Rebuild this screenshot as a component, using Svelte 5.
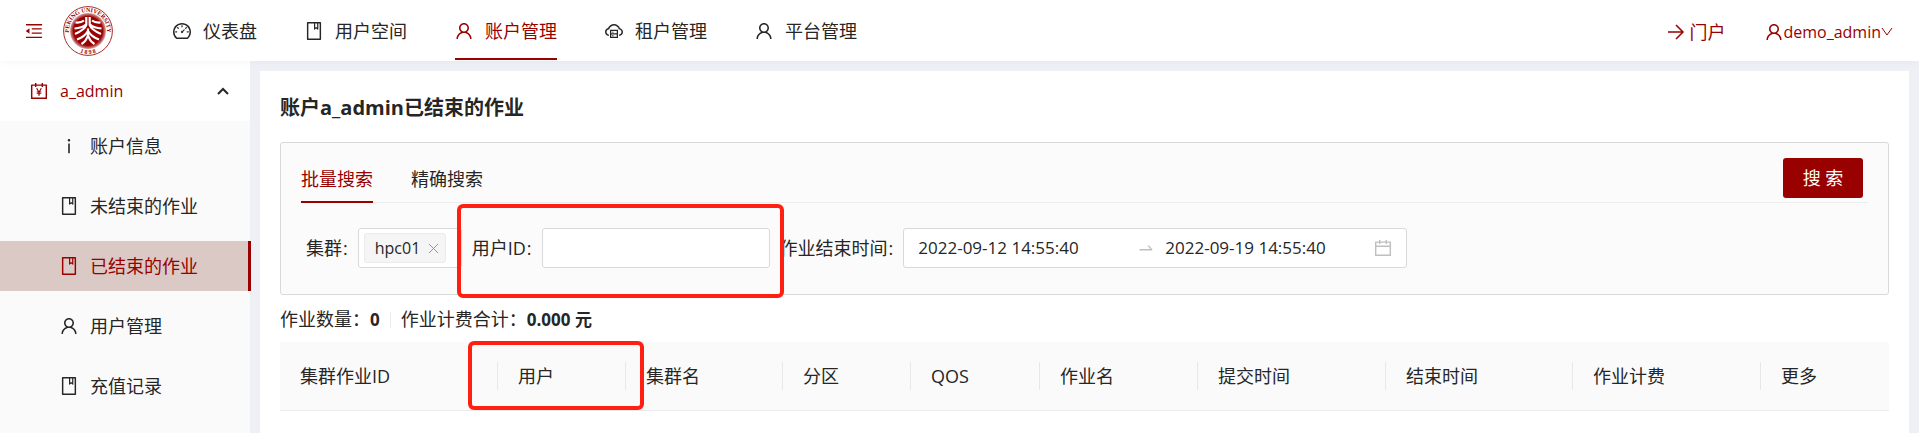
<script>
  const icons = {
    user: 'M858.5 763.6a374 374 0 00-80.6-119.5 375.63 375.63 0 00-119.5-80.6c-.4-.2-.8-.3-1.2-.5C719.5 518 760 444.7 760 362c0-137-111-248-248-248S264 225 264 362c0 82.7 40.5 156 102.8 201.1-.4.2-.8.3-1.2.5-44.8 18.9-85 46-119.5 80.6a375.63 375.63 0 00-80.6 119.5A371.7 371.7 0 00136 901.8a8 8 0 008 8.2h60c4.4 0 7.9-3.5 8-7.8 2-77.2 33-149.5 87.8-204.3 56.7-56.7 132-87.9 212.2-87.9s155.5 31.2 212.2 87.9C779 752.7 810 825 812 902.2c.1 4.4 3.6 7.8 8 7.8h60a8 8 0 008-8.2c-1-47.8-10.9-94.3-29.5-138.2zM512 534c-45.9 0-89.1-17.9-121.6-50.4S340 407.9 340 362c0-45.9 17.9-89.1 50.4-121.6S466.1 190 512 190s89.1 17.9 121.6 50.4S684 316.1 684 362c0 45.9-17.9 89.1-50.4 121.6S557.9 534 512 534z',
    book: 'M832 64H192c-17.7 0-32 14.3-32 32v832c0 17.7 14.3 32 32 32h640c17.7 0 32-14.3 32-32V96c0-17.7-14.3-32-32-32zm-260 72h96v209.9L621.5 312 572 347.4V136zm220 752H232V136h280v296.9c0 3.3 1 6.6 3 9.3a15.9 15.9 0 0022.3 3.7l83.8-59.9 81.4 59.4c2.7 2 6 3.1 9.4 3.1 8.8 0 16-7.2 16-16V136h64v752z',
    dashboard: 'M924.8 385.6a446.7 446.7 0 00-96-142.4 446.7 446.7 0 00-142.4-96C631.1 123.8 572.5 112 512 112s-119.1 11.8-174.4 35.2a446.7 446.7 0 00-142.4 96 446.7 446.7 0 00-96 142.4C75.8 440.9 64 499.5 64 560c0 132.7 58.3 257.7 159.9 343.1l1.7 1.4c5.8 4.8 13.1 7.5 20.6 7.5h531.7c7.5 0 14.8-2.7 20.6-7.5l1.7-1.4C901.7 817.7 960 692.7 960 560c0-60.5-11.9-119.1-35.2-174.4zM761.4 836H262.6A371.12 371.12 0 01140 560c0-99.4 38.7-192.8 109-263 70.3-70.3 163.7-109 263-109 99.4 0 192.8 38.7 263 109 70.3 70.3 109 163.7 109 263 0 105.6-44.5 205.5-122.6 276zM623.5 421.5a8.03 8.03 0 00-11.3 0L527.7 506c-18.7-5-39.4-.2-54.1 14.5a55.95 55.95 0 000 79.2 55.95 55.95 0 0079.2 0 55.87 55.87 0 0014.5-54.1l84.5-84.5c3.1-3.1 3.1-8.2 0-11.3l-28.3-28.3zM490 320h44c4.4 0 8-3.6 8-8v-80c0-4.4-3.6-8-8-8h-44c-4.4 0-8 3.6-8 8v80c0 4.4 3.6 8 8 8zm260 218v44c0 4.4 3.6 8 8 8h80c4.4 0 8-3.6 8-8v-44c0-4.4-3.6-8-8-8h-80c-4.4 0-8 3.6-8 8zm12.7-197.2l-31.1-31.1a8.03 8.03 0 00-11.3 0l-56.6 56.6a8.03 8.03 0 000 11.3l31.1 31.1c3.1 3.1 8.2 3.1 11.3 0l56.6-56.6c3.1-3.1 3.1-8.2 0-11.3zm-458.6-31.1a8.03 8.03 0 00-11.3 0l-31.1 31.1a8.03 8.03 0 000 11.3l56.6 56.6c3.1 3.1 8.2 3.1 11.3 0l31.1-31.1c3.1-3.1 3.1-8.2 0-11.3l-56.6-56.6zM262 530h-80c-4.4 0-8 3.6-8 8v44c0 4.4 3.6 8 8 8h80c4.4 0 8-3.6 8-8v-44c0-4.4-3.6-8-8-8z',
    fold: 'M408 442h480c4.4 0 8-3.6 8-8v-56c0-4.4-3.6-8-8-8H408c-4.4 0-8 3.6-8 8v56c0 4.4 3.6 8 8 8zm-8 204c0 4.4 3.6 8 8 8h480c4.4 0 8-3.6 8-8v-56c0-4.4-3.6-8-8-8H408c-4.4 0-8 3.6-8 8v56zm504-486H120c-4.4 0-8 3.6-8 8v56c0 4.4 3.6 8 8 8h784c4.4 0 8-3.6 8-8v-56c0-4.4-3.6-8-8-8zm0 632H120c-4.4 0-8 3.6-8 8v56c0 4.4 3.6 8 8 8h784c4.4 0 8-3.6 8-8v-56c0-4.4-3.6-8-8-8zM115.4 518.9L271.7 642c5.8 4.6 14.4.5 14.4-6.9V388.9c0-7.4-8.5-11.5-14.4-6.9L115.4 505.1a8.74 8.74 0 000 13.8z',
    calendar: 'M880 184H712v-64c0-4.4-3.6-8-8-8h-56c-4.4 0-8 3.6-8 8v64H384v-64c0-4.4-3.6-8-8-8h-56c-4.4 0-8 3.6-8 8v64H144c-17.7 0-32 14.3-32 32v664c0 17.7 14.3 32 32 32h736c17.7 0 32-14.3 32-32V216c0-17.7-14.3-32-32-32zm-40 656H184V460h656v380zM184 392V256h128v48c0 4.4 3.6 8 8 8h56c4.4 0 8-3.6 8-8v-48h256v48c0 4.4 3.6 8 8 8h56c4.4 0 8-3.6 8-8v-48h128v136H184z',
    account: 'M880 184H712v-64c0-4.4-3.6-8-8-8h-56c-4.4 0-8 3.6-8 8v64H384v-64c0-4.4-3.6-8-8-8h-56c-4.4 0-8 3.6-8 8v64H144c-17.7 0-32 14.3-32 32v664c0 17.7 14.3 32 32 32h736c17.7 0 32-14.3 32-32V216c0-17.7-14.3-32-32-32zm-40 656H184V256h128v48c0 4.4 3.6 8 8 8h56c4.4 0 8-3.6 8-8v-48h256v48c0 4.4 3.6 8 8 8h56c4.4 0 8-3.6 8-8v-48h128v584zM366 376h66l80 150 80-150h66L568 536h60v46h-84v36h84v46h-84v80h-64v-80h-84v-46h84v-36h-84v-46h60z',
    info: 'M448 224a64 64 0 10128 0 64 64 0 10-128 0zm96 168h-64c-4.4 0-8 3.6-8 8v464c0 4.4 3.6 8 8 8h64c4.4 0 8-3.6 8-8V400c0-4.4-3.6-8-8-8z',
    cloud: 'M704 446H320c-4.4 0-8 3.6-8 8v402c0 4.4 3.6 8 8 8h384c4.4 0 8-3.6 8-8V454c0-4.4-3.6-8-8-8zm-328 64h272v117H376V510zm272 290H376V683h272v117zM424 748a32 32 0 1064 0 32 32 0 10-64 0zm0-178a32 32 0 1064 0 32 32 0 10-64 0zM811.4 368.9C765.6 248 648.9 162 512.2 162S258.8 247.9 213 368.8C126.900 391.500 63.500 470.200 64 563.600 64.600 668 145.600 752.900 247.600 762c4.700.4 8.700-3.300 8.700-8v-60.400c0-4-3-7.400-7-7.900-27-3.400-52.500-15.200-72.100-34.500-24-23.500-37.200-55.100-37.200-88.600 0-28 9.100-54.400 26.200-76.400 16.700-21.400 40.200-36.900 66.100-43.700l37.900-10 13.900-36.700c8.600-22.800 20.600-44.200 35.700-63.500 14.900-19.200 32.600-36 52.400-50 41.100-28.900 89.500-44.200 140-44.200s98.900 15.300 140 44.300c19.900 14 37.500 30.800 52.400 50 15.100 19.300 27.100 40.700 35.700 63.500l13.800 36.600 37.800 10c54.200 14.400 92.100 63.700 92.100 120 0 33.600-13.200 65.100-37.200 88.600-19.500 19.200-44.900 31.100-71.900 34.500-4 .5-6.900 3.900-6.900 7.900V754c0 4.700 4.100 8.400 8.800 8 101.700-9.200 182.500-94 183.200-198.200.6-93.400-62.700-172.100-148.600-194.900z',
    swap: 'M873.1 596.2l-164-208A32 32 0 00684 376h-64.8c-6.7 0-10.4 7.7-6.3 13l144.3 183H152c-4.4 0-8 3.6-8 8v60c0 4.4 3.6 8 8 8h695.9c26.8 0 41.7-30.8 25.2-51.8z'
  };

  const nav = [
    { label: '仪表盘', icon: 'dashboard' },
    { label: '用户空间', icon: 'book' },
    { label: '账户管理', icon: 'user', active: true },
    { label: '租户管理', icon: 'cloud' },
    { label: '平台管理', icon: 'user' }
  ];

  const side = [
    { label: '账户信息', icon: 'info' },
    { label: '未结束的作业', icon: 'book' },
    { label: '已结束的作业', icon: 'book', active: true },
    { label: '用户管理', icon: 'user' },
    { label: '充值记录', icon: 'book' }
  ];

  const columns = [
    { label: '集群作业ID', width: 218 },
    { label: '用户', width: 128, marked: true },
    { label: '集群名', width: 157 },
    { label: '分区', width: 128 },
    { label: 'QOS', width: 129 },
    { label: '作业名', width: 158 },
    { label: '提交时间', width: 188 },
    { label: '结束时间', width: 187 },
    { label: '作业计费', width: 188 },
    { label: '更多', width: 128 }
  ];

  let userId = $state('');
  let start = $state('2022-09-12 14:55:40');
  let end = $state('2022-09-19 14:55:40');
</script>

{#snippet icon(name)}
  <svg class="icon" viewBox="64 64 896 896" aria-hidden="true"><path d={icons[name]} /></svg>
{/snippet}

<div class="page">
  <header>
    <button class="fold" type="button" aria-label="收起菜单">{@render icon('fold')}</button>
    <a class="logo" href="#home" aria-label="首页">
      <svg viewBox="-25 -25 50 50">
        <defs>
          <radialGradient id="disc">
            <stop offset="0.8" stop-color="#990000" />
            <stop offset="1" stop-color="#990000" stop-opacity="0.35" />
          </radialGradient>
          <path id="arcTop" d="M-16.6 9.500A19.100 19.100 0 1 1 16.600 9.500" />
          <path id="arcBottom" d="M-13 19A23 23 0 0 0 13 19" />
        </defs>
        <circle r="24.400" fill="#fff" stroke="#a92a2a" stroke-width="1" />
        <circle r="18" fill="url(#disc)" />
        <text class="seal"><textPath href="#arcTop" startOffset="50%" text-anchor="middle">PEKING UNIVERSITY</textPath></text>
        <text class="seal"><textPath href="#arcBottom" startOffset="50%" text-anchor="middle">1 8 9 8</textPath></text>
        <g fill="none" stroke="#fff" stroke-width="2.200">
          <path d="M-1.700-14V-6Q-3-1.500-13 3M-4-10.500Q-7-8-12.500-8.500M-2-6.500Q-6-3-13.500-2.500" />
          <path d="M1.700-14V-6Q3-1.500 13 3M4-10.500Q7-8 12.500-8.500M2-6.500Q6-3 13.500-2.500" />
          <path d="M0-2.500V4M0 0Q-3.500 6-11 8.500M0 0Q3.500 6 11 8.500M0 4Q-1.500 10-6.500 13M0 4Q1.500 10 6.500 13" />
        </g>
      </svg>
    </a>
    <nav class="top">
      {#each nav as item}
        <a href="#nav" class:active={item.active}>{@render icon(item.icon)}<span>{item.label}</span></a>
      {/each}
    </nav>
    <div class="account">
      <a href="#portal">
        <svg class="icon line" viewBox="0 0 18 18" aria-hidden="true"><path d="M1 9H16M9 2L16 9L9 16" /></svg>
        <span>门户</span>
      </a>
      <button class="user" type="button">
        {@render icon('user')}<span>demo_admin</span>
        <svg class="caret" viewBox="0 0 12 12" aria-hidden="true"><path d="M1 2L6 9L11 2" /></svg>
      </button>
    </div>
  </header>

  <div class="body">
    <aside>
      <button class="group" type="button">
        {@render icon('account')}<span>a_admin</span>
        <svg class="chevron" viewBox="0 0 12 12" aria-hidden="true"><path d="M1 9L6 4L11 9" /></svg>
      </button>
      <nav class="sub">
        {#each side as item}
          <a href="#side" class:active={item.active}>{@render icon(item.icon)}<span>{item.label}</span></a>
        {/each}
      </nav>
    </aside>

    <main>
      <h1>账户a_admin已结束的作业</h1>

      <form class="panel" onsubmit={(e) => e.preventDefault()}>
        <div class="tabs">
          <button class="tab active" type="button">批量搜索</button>
          <button class="tab" type="button">精确搜索</button>
          <button class="search" type="submit">搜 索</button>
        </div>
        <div class="fields">
          <div class="field">
            <span class="label" id="cluster">集群<i>:</i></span>
            <div class="select" role="group" aria-labelledby="cluster">
              <span class="tag">hpc01
                <button type="button" aria-label="移除">
                  <svg viewBox="0 0 12 12" aria-hidden="true"><path d="M1 1L11 11M11 1L1 11" /></svg>
                </button>
              </span>
            </div>
          </div>
          <div class="field">
            <label class="label" for="uid">用户ID<i>:</i></label>
            <input id="uid" class="box" type="text" bind:value={userId} />
            <div class="mark mark-field"></div>
          </div>
          <div class="field">
            <label class="label" for="start">作业结束时间<i>:</i></label>
            <div class="range">
              <input id="start" type="text" bind:value={start} />
              <svg class="icon" viewBox="0 0 1024 1024" aria-hidden="true"><path d={icons.swap} /></svg>
              <input type="text" aria-label="结束" bind:value={end} />
              {@render icon('calendar')}
            </div>
          </div>
        </div>
      </form>

      <div class="stats">
        <span>作业数量：<b>0</b></span>
        <span class="sep"></span>
        <span>作业计费合计：<b>0.000 元</b></span>
      </div>

      <table>
        <colgroup>
          {#each columns as col}<col style={`width:${col.width}px`} />{/each}
        </colgroup>
        <thead>
          <tr>
            {#each columns as col}
              <th scope="col">
                <div class="cell">{col.label}</div>
                {#if col.marked}<div class="mark mark-column"></div>{/if}
              </th>
            {/each}
          </tr>
        </thead>
      </table>
    </main>
  </div>
</div>

<style>
  :global(body) {
    background: #eff0f5;
  }
  .page {
    display: flex;
    flex-direction: column;
    min-height: 100vh;
    color: #262626;
    font: 18px/28px 'Open Sans', 'Noto Sans CJK SC', sans-serif;
  }
  .page *,
  .page *::before {
    box-sizing: border-box;
  }
  button,
  input {
    margin: 0;
    padding: 0;
    border: 0;
    background: none;
    color: inherit;
    font: inherit;
  }
  a {
    color: inherit;
    text-decoration: none;
  }
  .icon {
    flex: none;
    width: 18px;
    height: 18px;
    fill: currentColor;
  }
  .line,
  .caret,
  .chevron,
  .tag svg {
    fill: none;
    stroke: currentColor;
  }
  .line {
    stroke-width: 1.5;
  }

  header {
    position: relative;
    z-index: 1;
    display: flex;
    align-items: center;
    height: 61px;
    padding: 0 26px 0 25px;
    background: #fff;
    box-shadow: 0 2px 8px rgba(0, 0, 0, 0.03);
  }
  .fold {
    display: flex;
    color: #990000;
  }
  .logo {
    width: 50px;
    height: 50px;
    margin-left: 20px;
  }
  .logo svg {
    display: block;
  }
  .seal {
    fill: #990000;
    font: bold 6px 'Liberation Serif', serif;
  }
  .top {
    display: flex;
    gap: 48px;
    height: 100%;
    margin-left: 60px;
  }
  .top a {
    display: flex;
    align-items: center;
    gap: 12px;
    height: 60px;
    padding-top: 4px;
    border-bottom: 2px solid transparent;
  }
  .top a.active {
    border-color: #990000;
    color: #990000;
  }
  .account {
    display: flex;
    gap: 40px;
    margin-left: auto;
    padding-top: 2px;
    color: #990000;
  }
  .account a,
  .user {
    display: flex;
    align-items: center;
  }
  .account a {
    gap: 4px;
  }
  .user,
  .group {
    font-size: 16px;
  }
  .caret,
  .chevron {
    width: 12px;
    height: 12px;
  }

  .body {
    display: flex;
    flex: 1;
  }
  aside {
    flex: none;
    width: 250px;
    background: #fafafa;
  }
  .group {
    display: flex;
    align-items: center;
    gap: 12px;
    width: 100%;
    height: 60px;
    padding: 0 21px 0 30px;
    background: #fff;
    color: #990000;
  }
  .chevron {
    margin-left: auto;
    color: #262626;
    stroke-width: 2;
  }
  .sub {
    display: flex;
    flex-direction: column;
    gap: 10px;
  }
  .sub a {
    display: flex;
    align-items: center;
    gap: 12px;
    height: 50px;
    margin-right: -1px;
    padding-left: 60px;
    border-right: 3px solid transparent;
  }
  .sub a.active {
    border-color: #990000;
    background: #dac9c5;
    color: #990000;
  }

  main {
    flex: 1;
    min-width: 0;
    margin: 10px 10px 0;
    padding: 23px 20px 0;
    background: #fff;
  }
  h1 {
    margin: 0 0 20px;
    font-size: 20px;
    line-height: 28px;
    font-weight: 700;
  }
  .panel {
    padding: 0 20px 26px;
    border: 1px solid #d9d9d9;
    border-radius: 3px;
    background: #fbfbfb;
  }
  .tabs {
    display: flex;
    gap: 38px;
    height: 60px;
    border-bottom: 1px solid #ececec;
  }
  .tab {
    height: 60px;
    padding-top: 14px;
    border-bottom: 2px solid transparent;
  }
  .tab.active {
    border-color: #990000;
    color: #990000;
  }
  .search {
    width: 80px;
    height: 40px;
    margin: 15px 5px 0 auto;
    border-radius: 3px;
    background: #990000;
    color: #fff;
  }
  .fields {
    display: flex;
    gap: 10px;
    padding: 25px 5px 0;
  }
  .field {
    position: relative;
    display: flex;
    align-items: center;
  }
  .label {
    margin-right: 10px;
    white-space: nowrap;
  }
  .label i {
    margin-left: 1px;
    font-style: normal;
  }
  .select,
  .box,
  .range {
    height: 40px;
    border: 1px solid #d9d9d9;
    border-radius: 3px;
    background: #fff;
  }
  .select {
    width: 104px;
    padding: 4px 5px;
  }
  .tag {
    display: flex;
    align-items: center;
    justify-content: space-between;
    width: 82px;
    height: 30px;
    padding: 0 6px 0 10px;
    border: 1px solid #ebebeb;
    border-radius: 3px;
    background: #f5f5f5;
    font-size: 16px;
  }
  .tag button {
    display: flex;
    color: #8c8c8c;
  }
  .tag svg {
    width: 11px;
    height: 11px;
  }
  .box {
    width: 228px;
    padding: 0 14px;
  }
  .range {
    display: flex;
    align-items: center;
    width: 504px;
    padding: 0 14px;
    color: #bfbfbf;
    font-size: 17px;
  }
  .range input {
    flex: 1;
    min-width: 0;
    color: #262626;
  }
  .range input + .icon {
    margin: 0 10px;
  }
  .range .icon:last-child {
    margin: 0;
  }

  .mark {
    position: absolute;
    z-index: 1;
    border: 4px solid #ff2012;
    border-radius: 6px;
    pointer-events: none;
  }
  .mark-field {
    inset: -24px -14px -30px -15px;
  }
  .mark-column {
    inset: -1px -18px 0 -30px;
  }

  .stats {
    display: flex;
    align-items: center;
    gap: 10px;
    padding: 10px 0 8px;
  }
  .stats b {
    font-size: 17px;
    font-weight: 700;
  }
  .sep {
    width: 1px;
    height: 16px;
    background: #ececec;
  }

  table {
    width: 100%;
    border-collapse: separate;
    border-spacing: 0;
    table-layout: fixed;
  }
  th {
    position: relative;
    padding: 20px 0;
    border-bottom: 1px solid #ececec;
    background: #fafafa;
    font-weight: 400;
    text-align: left;
  }
  .cell {
    padding-left: 20px;
    border-right: 1px solid #e8e8e8;
    white-space: nowrap;
  }
  th:last-child .cell {
    border-right: 0;
  }
</style>
